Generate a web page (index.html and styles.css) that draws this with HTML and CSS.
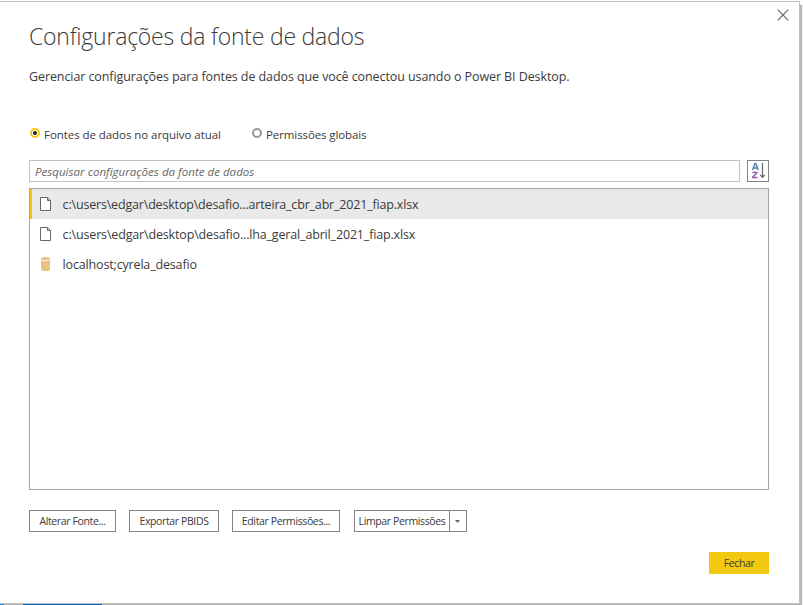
FILE: index.html
```
<!DOCTYPE html>
<html lang="pt-BR">
<head>
<meta charset="utf-8">
<title>Configurações da fonte de dados</title>
<link rel="stylesheet" href="styles.css">
</head>
<body>
<main class="dialog">
  <button class="close" aria-label="Fechar janela">
    <svg width="12" height="12" viewBox="0 0 12 12"><path d="M.7.7l10.600 10.600M11.300.7L.7 11.300" stroke="#666" stroke-width="1.200" fill="none"/></svg>
  </button>
  <h1 class="title"><span>Configurações da fonte de dados</span></h1>
  <p class="subtitle"><span>Gerenciar configurações para fontes de dados que você conectou usando o Power BI Desktop.</span></p>
  <div class="scopes">
    <label class="scope scope-current"><i class="radio checked"></i><span>Fontes de dados no arquivo atual</span></label>
    <label class="scope scope-global"><i class="radio"></i><span>Permissões globais</span></label>
  </div>
  <div class="search-row">
    <div class="search"><span>Pesquisar configurações da fonte de dados</span></div>
    <button class="sort" aria-label="Classificar">
      <svg width="20" height="20" viewBox="0 0 20 20" fill="none">
        <path d="M4.500 9L7 2.500h.8L10.300 9M5.500 7h3.800" stroke="#4f81b0" stroke-width="1.400"/>
        <path d="M4.500 11.500h4.500v.5L4.600 16v.5H9.500" stroke="#8e5fb5" stroke-width="1.300"/>
        <path d="M14.500 2v14.500M12.200 13.800l2.300 2.500 2.300-2.500" stroke="#666" stroke-width="1.200"/>
      </svg>
    </button>
  </div>
  <ul class="list">
    <li class="item selected">
      <svg class="icon" width="12" height="14" viewBox="0 0 12 14"><path d="M.5.5H7.500L10.500 3.500v10H.500zM7.500.5v3h3" fill="#fff" stroke="#666"/></svg>
      <span class="path-a">c:\users\edgar\desktop\desafio...arteira_cbr_abr_2021_fiap.xlsx</span>
    </li>
    <li class="item">
      <svg class="icon" width="12" height="14" viewBox="0 0 12 14"><path d="M.5.5H7.500L10.500 3.500v10H.500zM7.500.5v3h3" fill="#fff" stroke="#666"/></svg>
      <span class="path-b">c:\users\edgar\desktop\desafio...lha_geral_abril_2021_fiap.xlsx</span>
    </li>
    <li class="item">
      <svg class="icon" width="12" height="14" viewBox="0 0 12 14"><path d="M1 1.800v10.700c0 2 9 2 9 0V1.800z" fill="#eac282"/><ellipse cx="5.500" cy="1.700" rx="4.500" ry="1.700" fill="#eac282"/><path d="M1 2.500c1 1.600 8 1.600 9 0" fill="none" stroke="#fff" stroke-width=".9"/></svg>
      <span class="path-c">localhost;cyrela_desafio</span>
    </li>
  </ul>
  <div class="actions">
    <button class="btn change"><span>Alterar Fonte...</span></button>
    <button class="btn export"><span>Exportar PBIDS</span></button>
    <button class="btn edit"><span>Editar Permissões...</span></button>
    <div class="split">
      <button class="split-main"><span>Limpar Permissões</span></button>
      <button class="split-menu" aria-label="Mais opções"><svg width="5" height="3" viewBox="0 0 5 3"><path d="M0 0h5L2.500 3z" fill="#666"/></svg></button>
    </div>
  </div>
  <footer class="footer"><button class="primary"><span>Fechar</span></button></footer>
</main>
<div class="taskbar"><i class="task-start"></i><i class="task-active"></i></div>
</body>
</html>
```
FILE: styles.css
```
* { box-sizing: border-box; }
body {
  margin: 0;
  width: 803px;
  height: 605px;
  overflow: hidden;
  background: #fff;
  color: #3a3a3a;
  font: 12.5px/16px "Open Sans", "Noto Sans", sans-serif;
}
button { font: inherit; letter-spacing: inherit; color: inherit; margin: 0; padding: 0; background: #fff; border: 0; border-radius: 0; }
span { white-space: nowrap; }
svg { display: block; flex: none; }

.dialog {
  position: relative;
  width: 800px;
  height: 603px;
  margin-top: 1px;
  padding: 0 30px 0 29px;
  border: 1px solid #bfc1bf;
  border-left: 0;
  box-shadow: 2px 4px 1px #b9b9b9;
}
.close { position: absolute; right: 10px; top: 7px; }

.title { margin: 0; padding-top: 18px; height: 66px; font-size: 23px; line-height: 32px; font-weight: 300; letter-spacing: -.22px; }
.subtitle { margin: 0; height: 57px; line-height: 18px; letter-spacing: -.09px; }

.scopes { display: flex; height: 35px; font-size: 11.5px; letter-spacing: -.06px; }
.scope { display: flex; align-items: flex-start; width: 222px; }
.scope span { margin: 2px 0 0 4px; line-height: 16px; }
.scope-global span { letter-spacing: -.1px; }
.radio { width: 10px; height: 10px; margin: 3px 0 0 1px; border: 2px solid #999; border-radius: 50%; background: #fff; }
.radio.checked { border-color: #f2c811; background: radial-gradient(circle, #333 0 1.8px, #fff 2.300px); }

.search-row { display: flex; gap: 7px; height: 22px; }
.search { flex: 1; padding-left: 5px; border: 1px solid #c3c3c3; font-size: 11.5px; line-height: 22px; letter-spacing: .03px; font-style: italic; color: #666; }
.sort { width: 22px; border: 1px solid #858585; }

.list { width: 740px; height: 302px; margin: 6px 0 20px; padding: 0; border: 1px solid #a6a6a6; list-style: none; }
.item { display: flex; align-items: center; height: 30px; padding-left: 10px; letter-spacing: -.16px; }
.item span { margin: 1px 0 0 10.6px; }
.item .path-a { letter-spacing: -.18px; }
.selected { padding-left: 8px; border-left: 2px solid #f2c811; background: #e9e9e9; }

.actions { display: flex; height: 22px; font-size: 10.5px; letter-spacing: -.38px; }
.btn { height: 22px; margin-right: 13px; border: 1px solid #858585; }
.change { width: 87px; }
.export { width: 90px; }
.edit { width: 108px; margin-right: 14px; }
.split { display: flex; width: 113px; border: 1px solid #858585; }
.split-main { width: 95px; border-right: 1px solid #858585; }
.split-menu { flex: 1; display: flex; align-items: center; justify-content: center; padding-right: 1px; }
.footer { display: flex; justify-content: flex-end; margin-top: 20px; font-size: 10.5px; letter-spacing: -.36px; }
.primary { width: 60px; height: 22px; background: #f2c811; }

.taskbar { position: absolute; left: 0; top: 604px; display: flex; gap: 19px; height: 1px; width: 110px; }
.task-start { width: 4px; background: #1890f0; }
.task-active { width: 79px; background: #0067c0; }
```
